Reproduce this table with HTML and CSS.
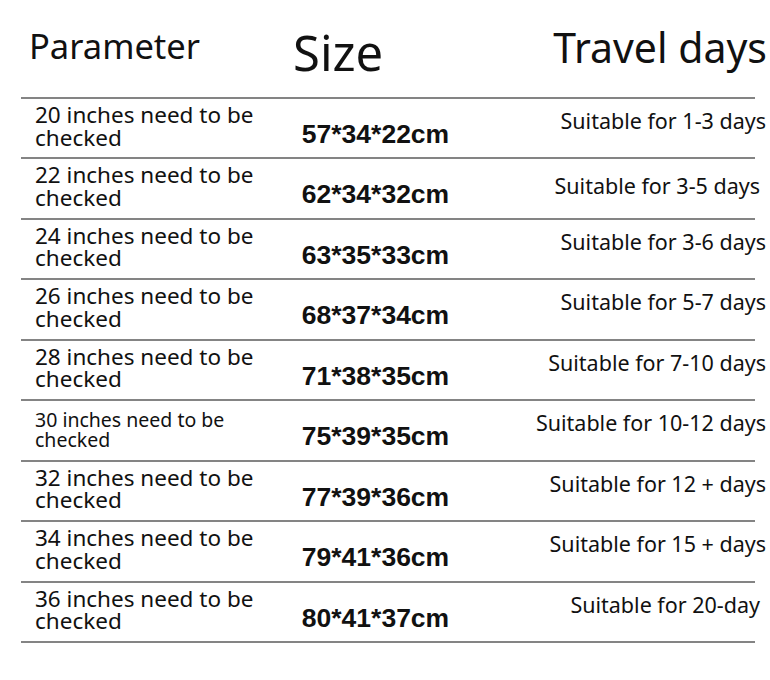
FILE: index.html
```html
<!DOCTYPE html>
<html lang="en">
<head>
<meta charset="utf-8">
<title>Luggage size table</title>
<link rel="stylesheet" href="styles.css">
</head>
<body>
<div class="page">
  <div class="head">
    <div class="h-param">Parameter</div>
    <div class="h-size">Size</div>
    <div class="h-days">Travel days</div>
  </div>
  <div class="table">
    <div class="row"><div class="param">20 inches need to be<br>checked</div><div class="size">57*34*22cm</div><div class="days">Suitable for 1-3 days</div></div>
    <div class="row"><div class="param">22 inches need to be<br>checked</div><div class="size">62*34*32cm</div><div class="days low">Suitable for 3-5 days</div></div>
    <div class="row"><div class="param">24 inches need to be<br>checked</div><div class="size">63*35*33cm</div><div class="days">Suitable for 3-6 days</div></div>
    <div class="row"><div class="param">26 inches need to be<br>checked</div><div class="size">68*37*34cm</div><div class="days">Suitable for 5-7 days</div></div>
    <div class="row"><div class="param">28 inches need to be<br>checked</div><div class="size">71*38*35cm</div><div class="days">Suitable for 7-10 days</div></div>
    <div class="row"><div class="param small">30 inches need to be<br>checked</div><div class="size">75*39*35cm</div><div class="days">Suitable for 10-12 days</div></div>
    <div class="row"><div class="param">32 inches need to be<br>checked</div><div class="size">77*39*36cm</div><div class="days">Suitable for 12 + days</div></div>
    <div class="row"><div class="param">34 inches need to be<br>checked</div><div class="size">79*41*36cm</div><div class="days">Suitable for 15 + days</div></div>
    <div class="row last"><div class="param">36 inches need to be<br>checked</div><div class="size">80*41*37cm</div><div class="days inset">Suitable for 20-day</div></div>
  </div>
</div>
</body>
</html>
```
FILE: styles.css
```css
html, body {
  margin: 0;
  padding: 0;
  background: #ffffff;
}
body {
  width: 770px;
  height: 680px;
  overflow: hidden;
  font-family: "Noto Sans", "Open Sans", sans-serif;
  color: #111111;
}
.page {
  display: flex;
  flex-direction: column;
}
.head {
  height: 97px;
  display: flex;
  align-items: flex-start;
  line-height: 1;
}
.h-param {
  font-size: 34.5px;
  margin-left: 29px;
  margin-top: 29px;
}
.h-size {
  font-size: 49px;
  margin-left: 93px;
  margin-top: 28px;
}
.h-days {
  font-size: 41px;
  margin-left: auto;
  margin-right: 3px;
  margin-top: 27px;
}
.table {
  margin-left: 21px;
  width: 734px;
  display: flex;
  flex-direction: column;
}
.row {
  box-sizing: border-box;
  height: 60.45px;
  border-top: 2px solid #848484;
  display: grid;
  grid-template-columns: 254px 201px 1fr;
  align-items: start;
}
.row.last {
  border-bottom: 2px solid #848484;
  height: 62.45px;
}
.param {
  font-size: 22.5px;
  line-height: 22.5px;
  padding-left: 14px;
  padding-top: 5px;
  white-space: nowrap;
}
.param.small {
  font-size: 19.5px;
  line-height: 19.5px;
  padding-top: 9px;
}
.size {
  font-family: "Liberation Sans", Arial, sans-serif;
  font-weight: bold;
  font-size: 26.5px;
  line-height: 1;
  text-align: center;
  padding-top: 22px;
  white-space: nowrap;
}
.days {
  font-size: 21.5px;
  line-height: 1;
  text-align: right;
  padding-top: 11px;
  margin-right: -11px;
  white-space: nowrap;
}
.days.low {
  padding-top: 16px;
  margin-right: -5px;
}
.days.inset {
  margin-right: -5px;
}
```
